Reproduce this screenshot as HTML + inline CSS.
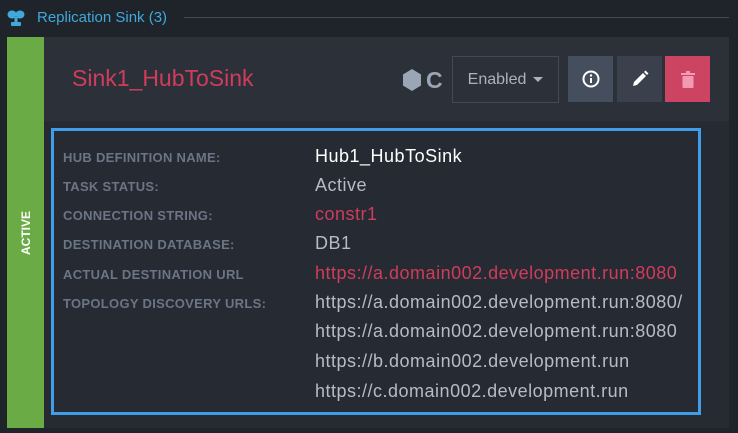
<!DOCTYPE html>
<html><head><style>
*{margin:0;padding:0;box-sizing:border-box}
body{width:738px;height:433px;background:#1f232a;font-family:"Liberation Sans",sans-serif;position:relative;overflow:hidden}
.abs{position:absolute}
.title{left:37px;top:9px;color:#3fa9dc;font-size:15px}
.line{left:184px;top:17px;width:545px;height:1px;background:#444a54}
.green{left:7px;top:37px;width:37px;height:391px;background:#6aab45}
.act{left:7px;top:37px;width:37px;height:391px;display:flex;align-items:center;justify-content:center}
.act span{transform:rotate(-90deg);color:#fff;font-size:12px;font-weight:bold;white-space:nowrap}
.head{left:44px;top:37px;width:685px;height:84px;background:#2c3139}
.bodyp{left:44px;top:121px;width:685px;height:307px;background:#262a32}
.name{left:72px;top:65px;color:#d03c5c;font-size:23px}
.box{left:51px;top:128px;width:650px;height:287px;border:3px solid #3f9de9}
.lab{left:63px;color:#6b7585;font-size:13px;font-weight:bold;letter-spacing:0.3px}
.val{left:315px;color:#b4bcc6;font-size:18px;letter-spacing:0.5px}
.btn{top:56px;height:46px;width:45px;display:flex;align-items:center;justify-content:center}
</style></head><body>
<svg class="abs" style="left:6px;top:10px" width="20" height="17" viewBox="0 0 20 17"><ellipse cx="6" cy="4.5" rx="4.5" ry="4" fill="#3fa9dc"/><ellipse cx="14" cy="4.5" rx="4.5" ry="4" fill="#3fa9dc"/><rect x="8.5" y="7" width="3" height="5" fill="#3fa9dc"/><rect x="5" y="12" width="10" height="4" rx="1" fill="#3fa9dc"/></svg>
<div class="abs title">Replication Sink (3)</div>
<div class="abs line"></div>
<div class="abs green"></div>
<div class="abs act"><span>ACTIVE</span></div>
<div class="abs head"></div>
<div class="abs bodyp"></div>
<div class="abs name">Sink1_HubToSink</div>
<svg class="abs" style="left:402px;top:69px" width="20" height="22" viewBox="0 0 20 22"><polygon points="10,0 19,5.5 19,16.5 10,22 1,16.5 1,5.5" fill="#9aa6b5"/></svg>
<div class="abs" style="left:426px;top:67px;color:#9aa6b5;font-size:23px;font-weight:bold">C</div>
<div class="abs" style="left:452px;top:56px;width:107px;height:47px;border:1px solid #434a55;color:#a9b3bf;font-size:16px;display:flex;align-items:center;justify-content:center">Enabled <span style="display:inline-block;margin-left:7px;border-left:5px solid transparent;border-right:5px solid transparent;border-top:5px solid #a9b3bf"></span></div>
<div class="abs btn" style="left:568px;background:#454e5d"><svg width="18" height="18" viewBox="0 0 18 18"><circle cx="9" cy="9" r="7.5" fill="none" stroke="#fff" stroke-width="2"/><rect x="8" y="8" width="2" height="5" fill="#fff"/><circle cx="9" cy="5.5" r="1.2" fill="#fff"/></svg></div>
<div class="abs btn" style="left:617px;background:#3a414d"><svg width="18" height="18" viewBox="0 0 18 18"><path d="M2 16 L3 12 L12 3 L15 6 L6 15 Z" fill="#fff"/><path d="M13 2 L14.5 0.5 L17.5 3.5 L16 5 Z" fill="#fff"/></svg></div>
<div class="abs btn" style="left:665px;background:#cc4462"><svg width="14" height="17" viewBox="0 0 14 17"><rect x="0" y="2" width="14" height="2" fill="#f49ab0"/><rect x="5" y="0" width="4" height="2" fill="#f49ab0"/><rect x="1.5" y="5" width="11" height="12" rx="1" fill="#f49ab0"/></svg></div>
<div class="abs box"></div>
<div class="abs lab" style="top:150px">HUB DEFINITION NAME:</div>
<div class="abs lab" style="top:179px">TASK STATUS:</div>
<div class="abs lab" style="top:208px">CONNECTION STRING:</div>
<div class="abs lab" style="top:237px">DESTINATION DATABASE:</div>
<div class="abs lab" style="top:267px">ACTUAL DESTINATION URL</div>
<div class="abs lab" style="top:296px">TOPOLOGY DISCOVERY URLS:</div>
<div class="abs val" style="top:146px;color:#fff">Hub1_HubToSink</div>
<div class="abs val" style="top:175px">Active</div>
<div class="abs val" style="top:204px;color:#d03c5c">constr1</div>
<div class="abs val" style="top:233px">DB1</div>
<div class="abs val" style="top:263px;color:#d03c5c">https://a.domain002.development.run:8080</div>
<div class="abs val" style="top:292px">https://a.domain002.development.run:8080/</div>
<div class="abs val" style="top:321px">https://a.domain002.development.run:8080</div>
<div class="abs val" style="top:351px">https://b.domain002.development.run</div>
<div class="abs val" style="top:381px">https://c.domain002.development.run</div>
</body></html>
